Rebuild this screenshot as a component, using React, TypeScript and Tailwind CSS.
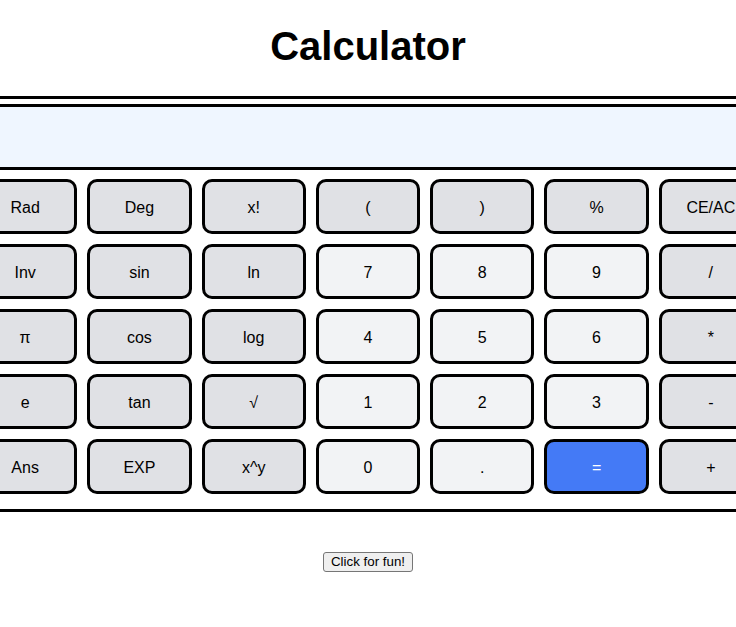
import React from "react";

type Kind = "fn" | "num" | "eq";
const rows: [string, Kind][][] = [
  [["Rad", "fn"], ["Deg", "fn"], ["x!", "fn"], ["(", "fn"], [")", "fn"], ["%", "fn"], ["CE/AC", "fn"]],
  [["Inv", "fn"], ["sin", "fn"], ["ln", "fn"], ["7", "num"], ["8", "num"], ["9", "num"], ["/", "fn"]],
  [["π", "fn"], ["cos", "fn"], ["log", "fn"], ["4", "num"], ["5", "num"], ["6", "num"], ["*", "fn"]],
  [["e", "fn"], ["tan", "fn"], ["√", "fn"], ["1", "num"], ["2", "num"], ["3", "num"], ["-", "fn"]],
  [["Ans", "fn"], ["EXP", "fn"], ["x^y", "fn"], ["0", "num"], [".", "num"], ["=", "eq"], ["+", "fn"]],
];

function Key({ label, kind }: { label: string; kind: Kind }) {
  const bg =
    kind === "eq"
      ? "bg-[#447af6] text-white"
      : kind === "num"
      ? "bg-[#f2f3f5] text-black"
      : "bg-[#e0e1e5] text-black";
  return (
    <button
      className={`h-[55px] w-full rounded-[10px] border-[3px] border-black pt-[2px] text-[16px] flex items-center justify-center ${bg}`}
    >
      {label}
    </button>
  );
}

export default function App() {
  return (
    <div
      className="w-full overflow-hidden bg-white"
      style={{ fontFamily: '"Liberation Sans", Arial, Helvetica, sans-serif' }}
    >
      <h1 className="pt-[23px] text-center text-[40px] font-bold leading-[46px] text-black">
        Calculator
      </h1>
      <div className="mt-[27px] flex justify-center">
        <div className="w-[840px] shrink-0 border-[3px] border-black px-[22px] pt-[5px] pb-[15px]">
          <div className="h-[66px] w-full border-[3px] border-black bg-[#eff6ff]" />
          <div className="mt-[9px] flex justify-center">
            <div className="grid w-[790px] shrink-0 grid-cols-7 gap-[10px]">
              {rows.flat().map(([l, k], i) => (
                <Key key={i} label={l} kind={k} />
              ))}
            </div>
          </div>
        </div>
      </div>
      <div className="mt-[40px] flex justify-center pb-[55px]">
        <button className="h-[20px] rounded-[3px] border border-[#767676] bg-[#efefef] px-[7px] text-[13.33px] leading-[16px] text-black">
          Click for fun!
        </button>
      </div>
    </div>
  );
}
